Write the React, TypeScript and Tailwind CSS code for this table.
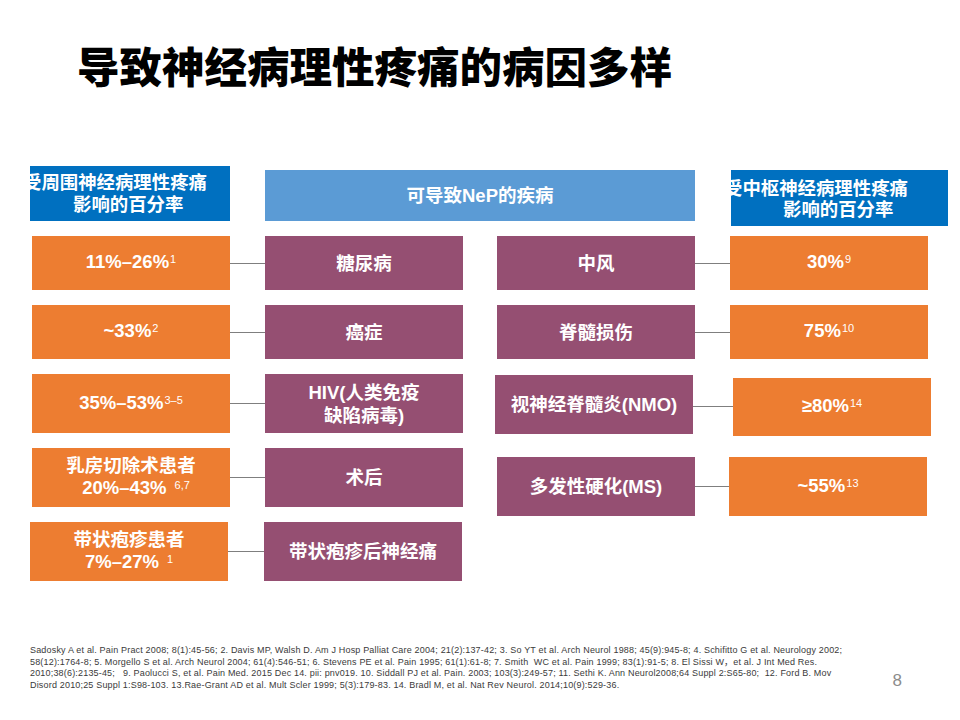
import type { ReactNode } from "react"

const FONT = `"Liberation Sans", "Noto Sans CJK SC", sans-serif`

function Sup({ children, gap = false }: { children: ReactNode; gap?: boolean }) {
  return (
    <span className={`relative -top-[5px] text-[11px] font-normal ${gap ? "ml-[8px]" : "ml-px"}`}>
      {children}
    </span>
  )
}

function Orange({ className = "", children }: { className?: string; children: ReactNode }) {
  return (
    <div
      className={`flex w-[198px] shrink-0 flex-col items-center justify-center bg-[#ED7D31] text-center text-[18.5px] font-bold leading-[22px] text-white ${className}`}
    >
      {children}
    </div>
  )
}

function Purple({ className = "", children }: { className?: string; children: ReactNode }) {
  return (
    <div
      className={`flex w-[198px] shrink-0 flex-col items-center justify-center bg-[#954F72] text-center text-[18.5px] font-bold leading-[23px] text-white ${className}`}
    >
      {children}
    </div>
  )
}

function Line({ className = "" }: { className?: string }) {
  return <div className={`h-px shrink-0 bg-[#7f7f7f] ${className}`} />
}

export default function App() {
  return (
    <div className="h-[720px] w-[960px] overflow-hidden bg-white" style={{ fontFamily: FONT }}>
      {/* title */}
      <div className="pl-[77px] pt-[45px] text-[42.5px] font-black leading-[48px] text-black">
        导致神经病理性疼痛的病因多样
      </div>

      {/* header boxes */}
      <div className="mt-[73px] flex items-start">
        <div className="ml-[30px] h-[55px] w-[200px] shrink-0 overflow-hidden bg-[#0070C0] text-[18.4px] font-bold leading-[22px] text-white">
          <div className="-ml-[7px] whitespace-nowrap pt-[6px]">
            <div>受周围神经病理性疼痛</div>
            <div className="pl-[50px]">影响的百分率</div>
          </div>
        </div>
        <div className="ml-[35px] mt-[4px] flex h-[51px] w-[430px] shrink-0 items-center justify-center bg-[#5B9BD5] text-[18.5px] font-bold text-white">
          可导致NeP的疾病
        </div>
        <div className="ml-[36px] mt-[4px] h-[56px] w-[217px] shrink-0 overflow-hidden bg-[#0070C0] text-[18.4px] font-bold leading-[21px] text-white">
          <div className="-ml-[7px] whitespace-nowrap pt-[8px]">
            <div>受中枢神经病理性疼痛</div>
            <div className="pl-[59px]">影响的百分率</div>
          </div>
        </div>
      </div>

      {/* body */}
      <div className="mt-[10px] flex items-start">
        {/* peripheral */}
        <div className="ml-[32px] flex flex-col gap-[15px]">
          <div className="flex items-center">
            <Orange className="h-[54px]">
              <div>
                11%–26%<Sup>1</Sup>
              </div>
            </Orange>
            <Line className="w-[35px]" />
            <Purple className="h-[54px]">糖尿病</Purple>
          </div>
          <div className="flex items-center">
            <Orange className="h-[54px]">
              <div>
                ~33%<Sup>2</Sup>
              </div>
            </Orange>
            <Line className="w-[35px]" />
            <Purple className="h-[54px]">癌症</Purple>
          </div>
          <div className="flex items-center">
            <Orange className="h-[59px]">
              <div>
                35%–53%<Sup>3–5</Sup>
              </div>
            </Orange>
            <Line className="w-[35px]" />
            <Purple className="h-[59px]">
              <div>HIV(人类免疫</div>
              <div>缺陷病毒)</div>
            </Purple>
          </div>
          <div className="flex items-center">
            <Orange className="h-[59px]">
              <div>乳房切除术患者</div>
              <div className="pl-[10px]">
                20%–43%<Sup gap>6,7</Sup>
              </div>
            </Orange>
            <Line className="w-[35px]" />
            <Purple className="h-[59px]">术后</Purple>
          </div>
          <div className="-ml-[2px] flex items-center">
            <Orange className="h-[59px] w-[197px]">
              <div>带状疱疹患者</div>
              <div>
                7%–27%<Sup gap>1</Sup>
              </div>
            </Orange>
            <Line className="w-[36px]" />
            <Purple className="h-[59px]">带状疱疹后神经痛</Purple>
          </div>
        </div>

        {/* central */}
        <div className="ml-[34px] flex flex-col">
          <div className="flex items-center">
            <Purple className="h-[54px]">中风</Purple>
            <Line className="w-[35px]" />
            <Orange className="h-[54px]">
              <div>
                30%<Sup>9</Sup>
              </div>
            </Orange>
          </div>
          <div className="mt-[15px] flex items-center">
            <Purple className="h-[54px]">脊髓损伤</Purple>
            <Line className="w-[35px]" />
            <Orange className="h-[54px]">
              <div>
                75%<Sup>10</Sup>
              </div>
            </Orange>
          </div>
          <div className="mt-[16px] -ml-[2px] flex items-start">
            <Purple className="h-[59px]">视神经脊髓炎(NMO)</Purple>
            <Line className="mt-[31px] w-[40px]" />
            <Orange className="mt-[3px] h-[58px]">
              <div>
                ≥80%<Sup>14</Sup>
              </div>
            </Orange>
          </div>
          <div className="mt-[21px] flex items-center">
            <Purple className="h-[59px]">多发性硬化(MS)</Purple>
            <Line className="w-[34px]" />
            <Orange className="h-[59px]">
              <div>
                ~55%<Sup>13</Sup>
              </div>
            </Orange>
          </div>
        </div>
      </div>

      {/* references */}
      <div className="mt-[64px] flex items-end">
        <div className="ml-[30px] whitespace-pre text-[9px] leading-[11.6px] tracking-[0.18px] text-[#3a3a3a]">
          <div>Sadosky A et al. Pain Pract 2008; 8(1):45-56; 2. Davis MP, Walsh D. Am J Hosp Palliat Care 2004; 21(2):137-42; 3. So YT et al. Arch Neurol 1988; 45(9):945-8; 4. Schifitto G et al. Neurology 2002;</div>
          <div>58(12):1764-8; 5. Morgello S et al. Arch Neurol 2004; 61(4):546-51; 6. Stevens PE et al. Pain 1995; 61(1):61-8; 7. Smith  WC et al. Pain 1999; 83(1):91-5; 8. El Sissi W，et al. J Int Med Res.</div>
          <div>2010;38(6):2135-45;   9. Paolucci S, et al. Pain Med. 2015 Dec 14. pii: pnv019. 10. Siddall PJ et al. Pain. 2003; 103(3):249-57; 11. Sethi K. Ann Neurol2008;64 Suppl 2:S65-80;  12. Ford B. Mov</div>
          <div>Disord 2010;25 Suppl 1:S98-103. 13.Rae-Grant AD et al. Mult Scler 1999; 5(3):179-83. 14. Bradl M, et al. Nat Rev Neurol. 2014;10(9):529-36.</div>
        </div>
        <div className="ml-auto mr-[58px] text-[17px] font-light leading-[20px] text-[#8c8c8c]">8</div>
      </div>
    </div>
  )
}
